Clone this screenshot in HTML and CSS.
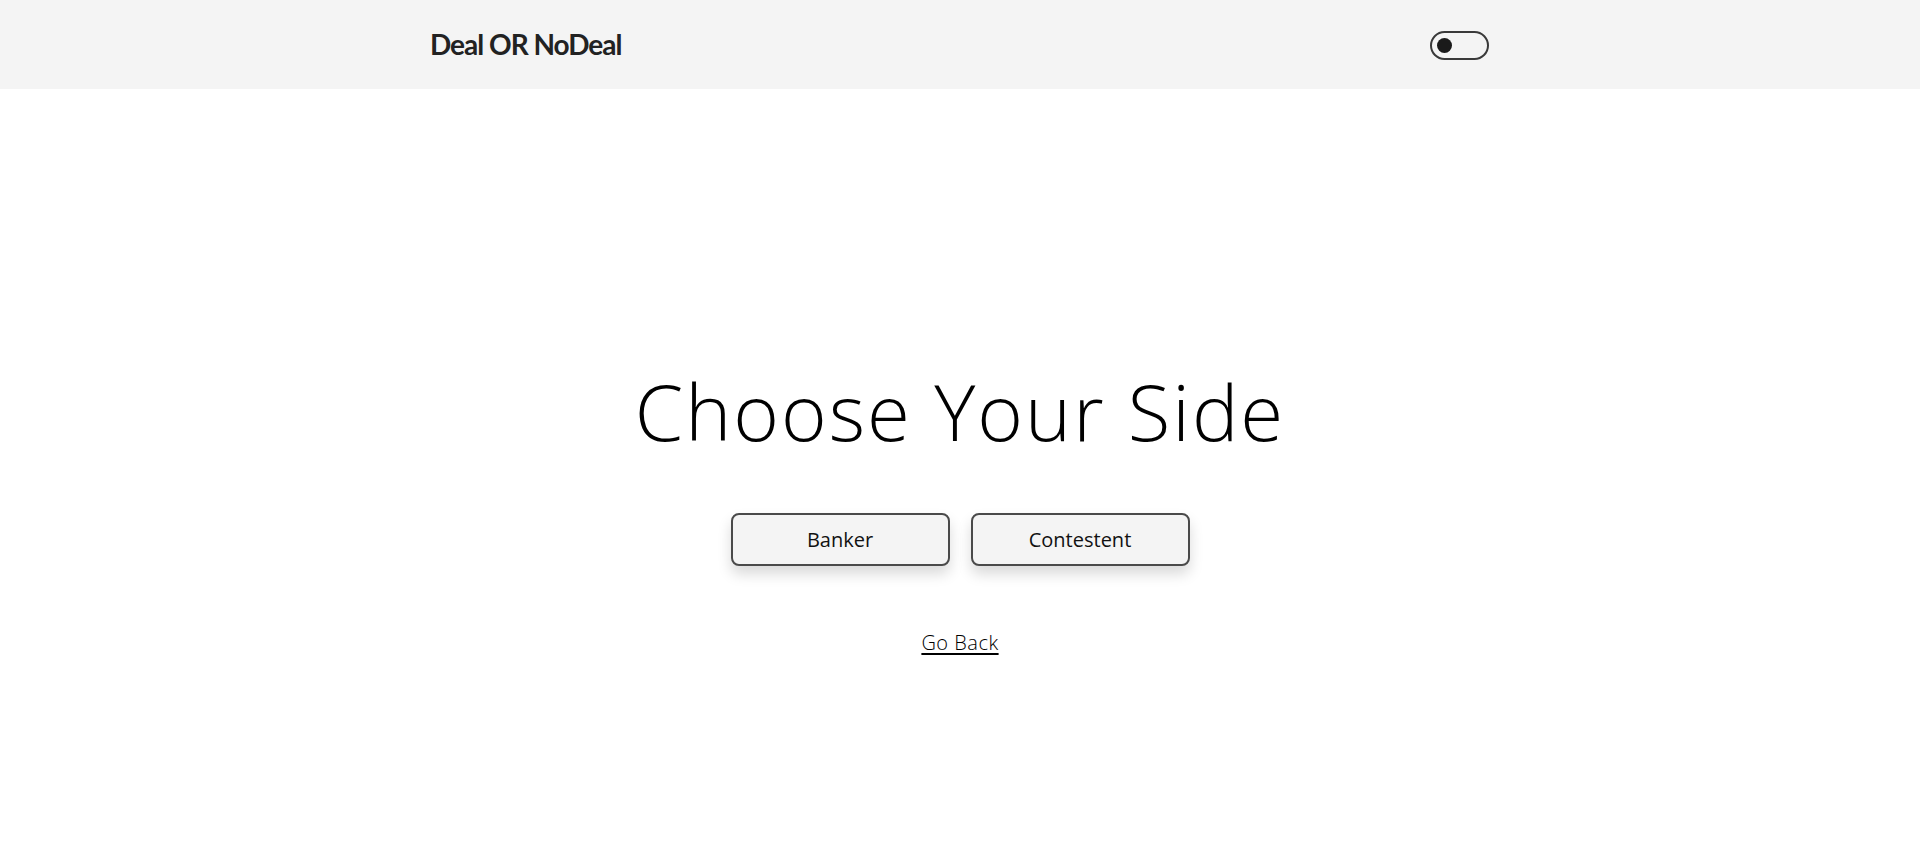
FILE: index.html
```html
<!DOCTYPE html>
<html lang="en">
<head>
<meta charset="utf-8">
<title>Deal OR NoDeal</title>
<link rel="stylesheet" href="styles.css">
</head>
<body>
<header class="topbar">
  <div class="topbar-inner">
    <a class="logo" href="#">Deal OR NoDeal</a>
    <button class="toggle" aria-label="Toggle theme"><span class="knob"></span></button>
  </div>
</header>
<main class="stage">
  <h1 class="title">Choose Your Side</h1>
  <div class="choices">
    <button class="choice">Banker</button>
    <button class="choice">Contestent</button>
  </div>
  <a class="back" href="#">Go Back</a>
</main>
</body>
</html>
```
FILE: styles.css
```css
* { box-sizing: border-box; }
html, body { margin: 0; padding: 0; }
body {
  background: #ffffff;
  color: #000;
  font-family: "Open Sans", "Liberation Sans", sans-serif;
  height: 855px;
  overflow: hidden;
}
.topbar {
  background: #f4f4f4;
  height: 89px;
}
.topbar-inner {
  width: 1058px;
  margin: 0 auto;
  height: 100%;
  display: flex;
  align-items: center;
  justify-content: space-between;
}
.logo {
  font-family: "Lato", sans-serif;
  font-weight: 700;
  font-size: 28px;
  color: #222;
  text-decoration: none;
  letter-spacing: -1px;
  margin-left: -1px;
  margin-top: -2px;
}
.toggle {
  width: 59px;
  height: 29px;
  border: 2px solid #3a3a3a;
  border-radius: 15px;
  background: transparent;
  padding: 0 0 0 5px;
  display: flex;
  align-items: center;
  margin-top: 2px;
  cursor: pointer;
}
.knob {
  width: 15px;
  height: 15px;
  border-radius: 50%;
  background: #1a1a1a;
}
.stage {
  display: flex;
  flex-direction: column;
  align-items: center;
  padding-top: 283px;
}
.title {
  margin: 0;
  font-weight: 300;
  font-size: 78px;
  line-height: 1;
  letter-spacing: 2px;
}
.choices {
  display: flex;
  gap: 21px;
  margin-top: 63px;
}
.choice {
  width: 219px;
  height: 53px;
  background: #f4f4f4;
  border: 2px solid #4a4a4a;
  border-radius: 8px;
  font-family: "Open Sans", sans-serif;
  font-weight: 400;
  font-size: 20px;
  color: #111;
  box-shadow: 0 8px 14px rgba(0,0,0,0.15);
  cursor: pointer;
}
.back {
  margin-top: 63px;
  font-size: 20px;
  font-weight: 300;
  letter-spacing: 0.5px;
  color: #000;
  text-decoration: underline;
  text-underline-offset: 3px;
}
```
